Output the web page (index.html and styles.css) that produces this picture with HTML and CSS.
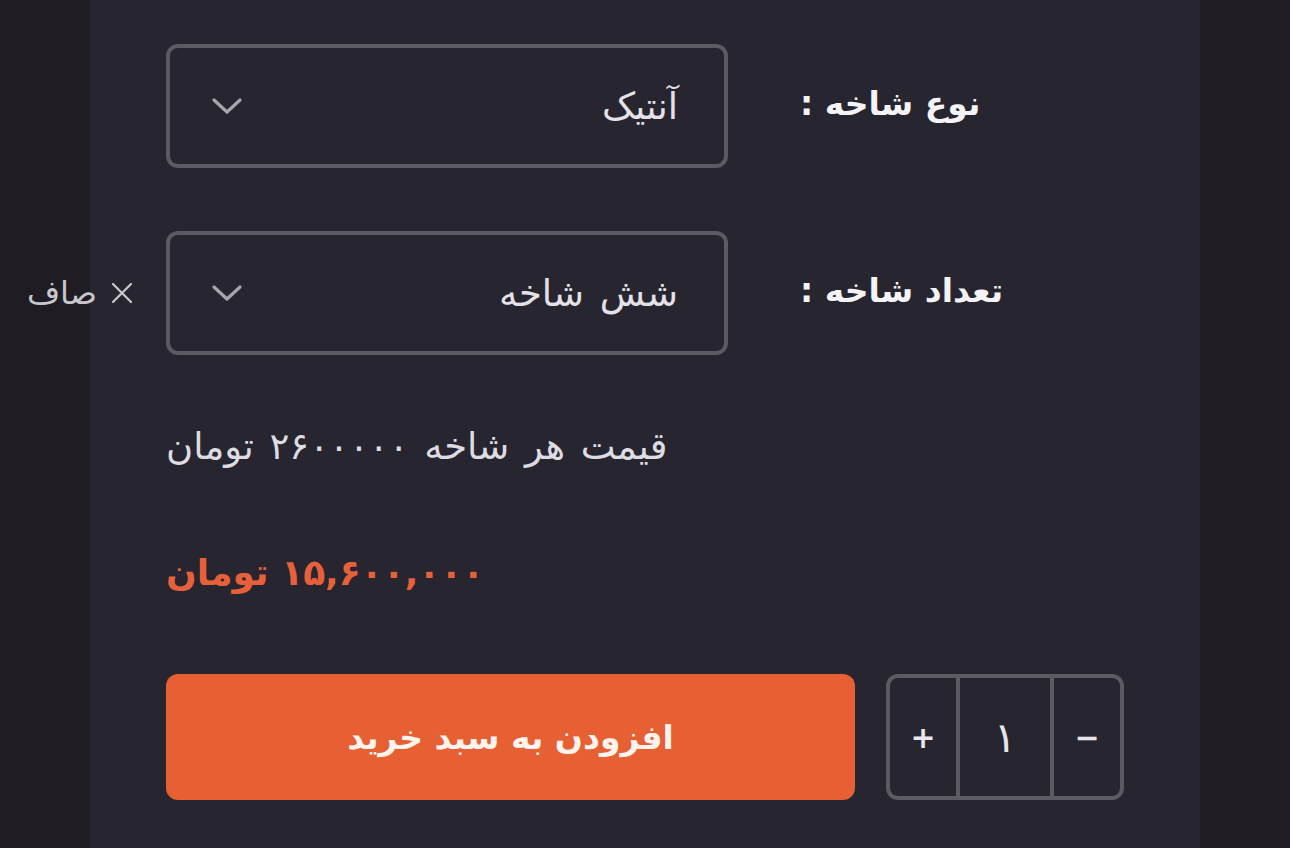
FILE: index.html
```html
<!DOCTYPE html>
<html lang="fa" dir="rtl">
<head>
<meta charset="utf-8">
<title>محصول</title>
<link rel="stylesheet" href="styles.css">
</head>
<body>
<div class="page">
  <div class="panel">
    <div class="variations">
      <div class="var-row">
        <div class="var-label">نوع شاخه :</div>
        <div class="var-value">
          <div class="select">
            <span class="select-text">آنتیک</span>
            <svg class="chev" width="30" height="16" viewBox="0 0 30 16"><path d="M2 2 L15 14 L28 2" fill="none" stroke="#a6a4ac" stroke-width="3.2" stroke-linecap="round" stroke-linejoin="round"/></svg>
          </div>
        </div>
      </div>
      <div class="var-row">
        <div class="var-label">تعداد شاخه :</div>
        <div class="var-value">
          <div class="select">
            <span class="select-text">شش شاخه</span>
            <svg class="chev" width="30" height="16" viewBox="0 0 30 16"><path d="M2 2 L15 14 L28 2" fill="none" stroke="#a6a4ac" stroke-width="3.2" stroke-linecap="round" stroke-linejoin="round"/></svg>
          </div>
          <a class="reset" href="#">
            <svg width="22" height="22" viewBox="0 0 22 22"><path d="M2 2 L20 20 M20 2 L2 20" stroke="#c9c7cd" stroke-width="2.2" stroke-linecap="round"/></svg>
            <span>صاف</span>
          </a>
        </div>
      </div>
    </div>

    <div class="unit-price">قیمت هر شاخه ۲۶۰۰۰۰۰ تومان</div>
    <div class="total-price">۱۵,۶۰۰,۰۰۰ تومان</div>

    <div class="actions">
      <div class="qty">
        <button class="qty-btn">−</button>
        <div class="qty-input">۱</div>
        <button class="qty-btn plus">+</button>
      </div>
      <button class="add-cart">افزودن به سبد خرید</button>
    </div>
  </div>
</div>
</body>
</html>
```

FILE: styles.css
```css
html, body {
  margin: 0;
  padding: 0;
}
body {
  background: #1f1d23;
  font-family: "DejaVu Sans", "Noto Sans", sans-serif;
  color: #e2e0e6;
  height: 848px;
  overflow: hidden;
}
.page {
  display: flex;
  justify-content: center;
  height: 848px;
}
.panel {
  width: 1110px;
  box-sizing: border-box;
  background: #27252f;
  padding: 44px 76px 0 76px;
  direction: rtl;
}
.variations {
  display: flex;
  flex-direction: column;
  gap: 63px;
}
.var-row {
  display: flex;
  align-items: center;
  justify-content: flex-end;
  gap: 72px;
}
.var-label {
  font-size: 33px;
  font-weight: bold;
  color: #f4f3f6;
  white-space: nowrap;
  padding-bottom: 6px;
}
.var-value {
  position: relative;
}
.select {
  width: 562px;
  height: 124px;
  box-sizing: border-box;
  border: 4px solid #5c5a63;
  border-radius: 12px;
  display: flex;
  align-items: center;
  justify-content: space-between;
  padding: 0 46px 0 42px;
}
.select-text {
  font-size: 37px;
  color: #e4e2e8;
  word-spacing: 4px;
}
.chev {
  display: block;
}
.reset {
  position: absolute;
  right: calc(100% + 33px);
  top: 50%;
  transform: translateY(-50%);
  display: flex;
  align-items: center;
  gap: 14px;
  color: #c9c7cd;
  text-decoration: none;
  font-size: 32px;
  white-space: nowrap;
}
.reset svg {
  display: block;
}
.unit-price {
  margin-top: 66px;
  font-size: 37px;
  line-height: 52px;
  color: #dedce3;
  text-align: left;
  word-spacing: 4px;
}
.total-price {
  margin-top: 74px;
  font-size: 36px;
  line-height: 52px;
  font-weight: bold;
  color: #e6613a;
  text-align: left;
}
.actions {
  margin-top: 75px;
  display: flex;
  gap: 31px;
  height: 126px;
}
.qty {
  width: 238px;
  box-sizing: border-box;
  border: 4px solid #5c5a63;
  border-radius: 12px;
  display: flex;
  overflow: hidden;
}
.qty-btn {
  width: 66px;
  background: transparent;
  border: 0;
  color: #e8e6ec;
  font-family: "DejaVu Sans", sans-serif;
  font-size: 30px;
  font-weight: bold;
  padding: 0;
}
.qty-input {
  flex: 1;
  border-left: 4px solid #5c5a63;
  border-right: 4px solid #5c5a63;
  display: flex;
  align-items: center;
  justify-content: center;
  font-size: 42px;
  color: #e8e6ec;
}
.add-cart {
  flex: 1;
  background: #e66033;
  border: 0;
  border-radius: 12px;
  color: #fff3ee;
  font-family: "DejaVu Sans", sans-serif;
  font-size: 33px;
  font-weight: bold;
  direction: rtl;
}
```
